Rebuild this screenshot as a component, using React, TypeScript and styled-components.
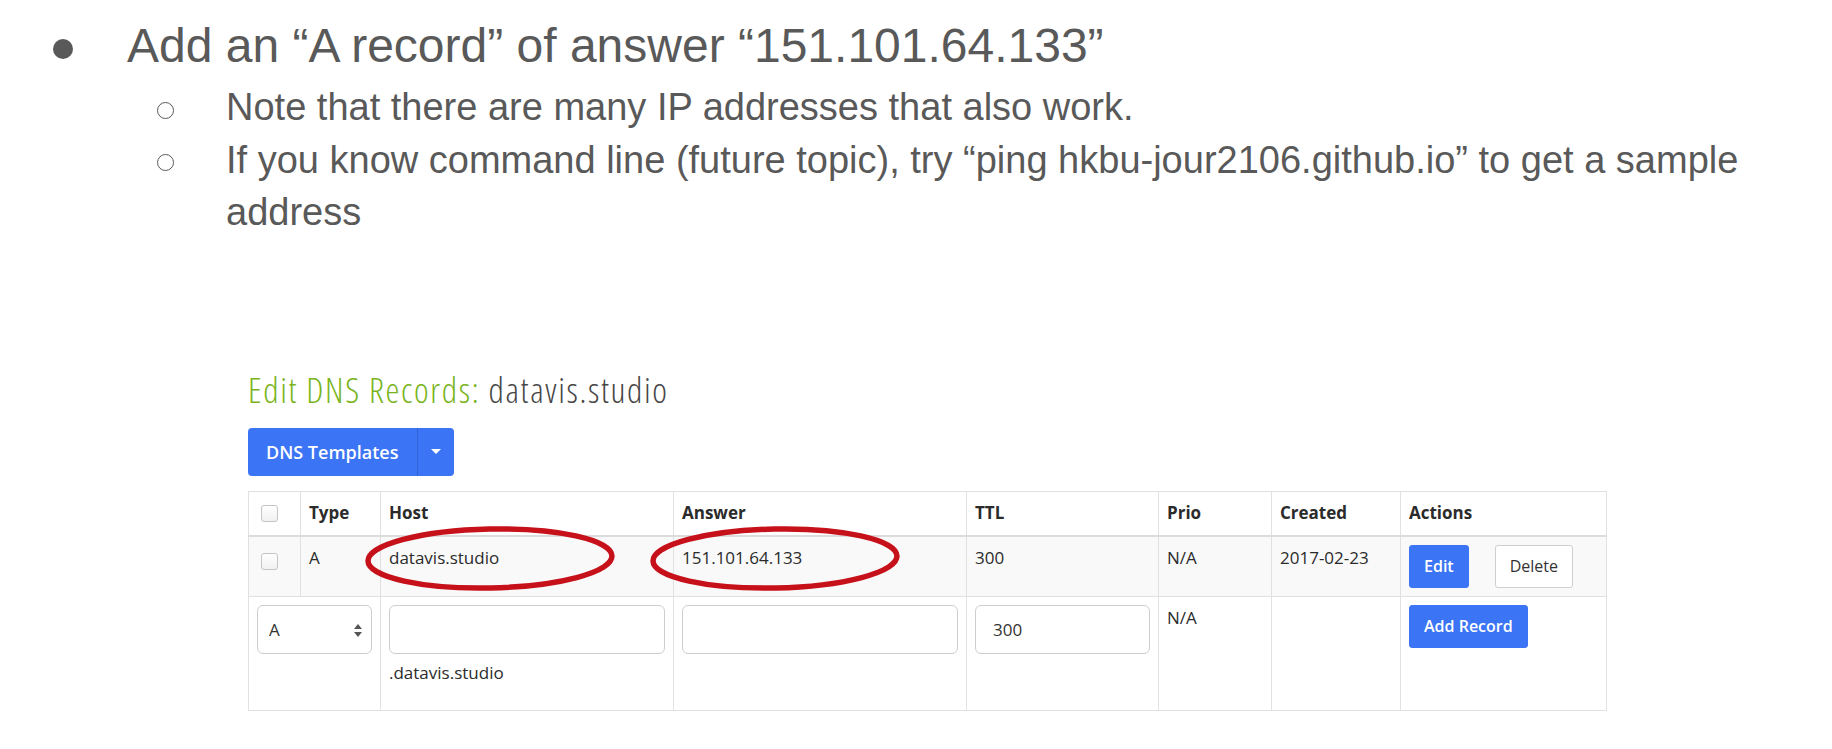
import React from 'react';
import styled, { createGlobalStyle } from 'styled-components';

const GlobalStyle = createGlobalStyle`
  html, body {
    margin: 0;
    padding: 0;
    background: #ffffff;
  }
  body {
    font-family: 'Liberation Sans', Arial, sans-serif;
  }
`;

const Slide = styled.div`
  width: 1832px;
  height: 749px;
  box-sizing: border-box;
  padding: 18px 40px 0 0;
  overflow: hidden;
`;

const BulletList = styled.ul`
  list-style: none;
  margin: 0;
  padding: 0;
  color: #595959;
`;

const BulletItem = styled.li<{ $level: 1 | 2 }>`
  display: grid;
  grid-template-columns: ${({ $level }) => ($level === 1 ? '127px' : '226px')} 1fr;
  font-size: ${({ $level }) => ($level === 1 ? '48px' : '38px')};
  line-height: ${({ $level }) => ($level === 1 ? '56px' : '52.5px')};
  margin-bottom: ${({ $level }) => ($level === 1 ? '7px' : '0')};
`;

const Marker = styled.span<{ $level: 1 | 2 }>`
  display: flex;
  align-items: center;
  box-sizing: border-box;
  height: ${({ $level }) => ($level === 1 ? '56px' : '52.5px')};
  padding-left: ${({ $level }) => ($level === 1 ? '53px' : '157px')};
  padding-top: ${({ $level }) => ($level === 1 ? '5px' : '6px')};

  &::before {
    content: '';
    box-sizing: border-box;
    border-radius: 50%;
    width: ${({ $level }) => ($level === 1 ? '20px' : '17px')};
    height: ${({ $level }) => ($level === 1 ? '20px' : '17px')};
    background: ${({ $level }) => ($level === 1 ? '#595959' : 'transparent')};
    border: ${({ $level }) => ($level === 1 ? 'none' : '1.6px solid #595959')};
  }
`;

const Panel = styled.section`
  margin-top: 129px;
  padding-left: 248px;
  font-family: 'Open Sans', 'Liberation Sans', sans-serif;
  color: #333333;
`;

const Title = styled.h2`
  margin: 0;
  font-family: 'Open Sans', sans-serif;
  font-weight: 300;
  font-stretch: 75%;
  font-size: 35px;
  line-height: 44px;
  letter-spacing: 1.65px;
  color: #79b41c;
`;

const Domain = styled.span`
  color: #474747;
`;

const SplitButton = styled.div`
  display: inline-flex;
  margin-top: 16px;
  height: 48px;
  border-radius: 4px;
  background: #3b74f5;
  color: #ffffff;
  overflow: hidden;
`;

const SplitMain = styled.span`
  padding: 0 18px;
  font-size: 18px;
  font-weight: 600;
  line-height: 48px;
`;

const SplitCaret = styled.span`
  width: 36px;
  display: flex;
  align-items: center;
  justify-content: center;
  border-left: 1px solid rgba(0, 0, 0, 0.14);

  &::after {
    content: '';
    border-left: 5px solid transparent;
    border-right: 5px solid transparent;
    border-top: 5px solid #ffffff;
  }
`;

const Table = styled.table`
  margin-top: 15px;
  width: 1358px;
  table-layout: fixed;
  border-collapse: collapse;
  border: 1px solid #e1e1e1;
  font-size: 17px;
`;

const HeadCell = styled.th`
  text-align: left;
  font-weight: 700;
  padding: 8px 8px 10px;
  line-height: 25px;
  color: #2b2b2b;
  border-left: 1px solid #e1e1e1;
  border-bottom: 2px solid #dcdcdc;
  vertical-align: top;
`;

const Row = styled.tr<{ $striped?: boolean }>`
  background: ${({ $striped }) => ($striped ? '#f9f9f9' : '#ffffff')};
`;

const Cell = styled.td`
  position: relative;
  padding: 8px;
  line-height: 25px;
  color: #2b2b2b;
  border-left: 1px solid #e1e1e1;
  border-bottom: 1px solid #e1e1e1;
  vertical-align: top;
`;

const Check = styled.span<{ $offset?: number }>`
  display: block;
  box-sizing: border-box;
  width: 17px;
  height: 17px;
  margin: ${({ $offset = 4 }) => `${$offset}px 0 0 4px`};
  border: 1px solid #c4c4c4;
  border-radius: 3px;
  background: linear-gradient(#ffffff, #f1f1f1);
`;

const Ring = styled.svg<{ $left: number }>`
  position: absolute;
  left: ${({ $left }) => $left}px;
  top: -11px;
  width: 252px;
  height: 65px;
  overflow: visible;
  pointer-events: none;
`;

const Actions = styled.div`
  display: flex;
  gap: 26px;
`;

const Button = styled.button<{ $variant?: 'primary' | 'default' }>`
  height: 43px;
  padding: 0 14px;
  border-radius: 3px;
  font-family: 'Open Sans', sans-serif;
  font-size: 16px;
  font-weight: ${({ $variant }) => ($variant === 'default' ? 400 : 600)};
  border: 1px solid ${({ $variant }) => ($variant === 'default' ? '#cfcfcf' : '#3b74f5')};
  background: ${({ $variant }) => ($variant === 'default' ? '#ffffff' : '#3b74f5')};
  color: ${({ $variant }) => ($variant === 'default' ? '#333333' : '#ffffff')};
  cursor: pointer;
`;

const Field = styled.input<{ $pad?: number }>`
  display: block;
  box-sizing: border-box;
  width: 100%;
  height: 49px;
  padding: 0 ${({ $pad = 12 }) => $pad}px;
  border: 1px solid #cdcdcd;
  border-radius: 6px;
  background: #ffffff;
  font-family: 'Open Sans', sans-serif;
  font-size: 17px;
  color: #333333;
  outline: none;
`;

const SelectWrap = styled.div`
  position: relative;
`;

const Select = styled.select`
  display: block;
  box-sizing: border-box;
  width: 100%;
  height: 49px;
  padding: 0 11px;
  appearance: none;
  border: 1px solid #cdcdcd;
  border-radius: 6px;
  background: #ffffff;
  font-family: 'Open Sans', sans-serif;
  font-size: 17px;
  color: #333333;
  outline: none;
`;

const SelectArrows = styled.svg`
  position: absolute;
  right: 10px;
  top: 19px;
  width: 8px;
  height: 13px;
  pointer-events: none;
`;

const Suffix = styled.div`
  margin: 6px 0 17px;
  line-height: 25px;
`;

const columns = [52, 80, 293, 293, 192, 113, 129, 206];

function Ellipse({ left }: { left: number }) {
  return (
    <Ring $left={left} viewBox="0 0 252 65">
      <ellipse
        cx="126"
        cy="32.5"
        rx="122"
        ry="29.5"
        fill="none"
        stroke="#c6111a"
        strokeWidth="5.5"
        transform="rotate(-1.2 126 32.5)"
      />
    </Ring>
  );
}

export default function App() {
  return (
    <Slide>
      <GlobalStyle />
      <BulletList>
        <BulletItem $level={1}>
          <Marker $level={1} />
          <span>Add an “A record” of answer “151.101.64.133”</span>
        </BulletItem>
        <BulletItem $level={2}>
          <Marker $level={2} />
          <span>Note that there are many IP addresses that also work.</span>
        </BulletItem>
        <BulletItem $level={2}>
          <Marker $level={2} />
          <span>
            If you know command line (future topic), try “ping hkbu-jour2106.github.io” to get a sample
            address
          </span>
        </BulletItem>
      </BulletList>

      <Panel>
        <Title>
          Edit DNS Records: <Domain>datavis.studio</Domain>
        </Title>
        <SplitButton>
          <SplitMain>DNS Templates</SplitMain>
          <SplitCaret />
        </SplitButton>

        <Table>
          <colgroup>
            {columns.map((w, i) => (
              <col key={i} style={{ width: w }} />
            ))}
          </colgroup>
          <thead>
            <tr>
              <HeadCell>
                <Check $offset={5} />
              </HeadCell>
              <HeadCell>Type</HeadCell>
              <HeadCell>Host</HeadCell>
              <HeadCell>Answer</HeadCell>
              <HeadCell>TTL</HeadCell>
              <HeadCell>Prio</HeadCell>
              <HeadCell>Created</HeadCell>
              <HeadCell>Actions</HeadCell>
            </tr>
          </thead>
          <tbody>
            <Row $striped>
              <Cell>
                <Check $offset={8} />
              </Cell>
              <Cell>A</Cell>
              <Cell>
                datavis.studio
                <Ellipse left={-17} />
              </Cell>
              <Cell>
                151.101.64.133
                <Ellipse left={-25} />
              </Cell>
              <Cell>300</Cell>
              <Cell>N/A</Cell>
              <Cell>2017-02-23</Cell>
              <Cell>
                <Actions>
                  <Button>Edit</Button>
                  <Button $variant="default">Delete</Button>
                </Actions>
              </Cell>
            </Row>
            <Row>
              <Cell colSpan={2}>
                <SelectWrap>
                  <Select defaultValue="A">
                    <option value="A">A</option>
                    <option value="AAAA">AAAA</option>
                    <option value="CNAME">CNAME</option>
                  </Select>
                  <SelectArrows viewBox="0 0 8 13">
                    <path d="M4 0 L8 5 L0 5 Z" fill="#555" />
                    <path d="M0 8 L8 8 L4 13 Z" fill="#555" />
                  </SelectArrows>
                </SelectWrap>
              </Cell>
              <Cell>
                <Field readOnly defaultValue="" />
                <Suffix>.datavis.studio</Suffix>
              </Cell>
              <Cell>
                <Field readOnly defaultValue="" />
              </Cell>
              <Cell>
                <Field readOnly defaultValue="300" $pad={17} />
              </Cell>
              <Cell>N/A</Cell>
              <Cell />
              <Cell>
                <Button>Add Record</Button>
              </Cell>
            </Row>
          </tbody>
        </Table>
      </Panel>
    </Slide>
  );
}
